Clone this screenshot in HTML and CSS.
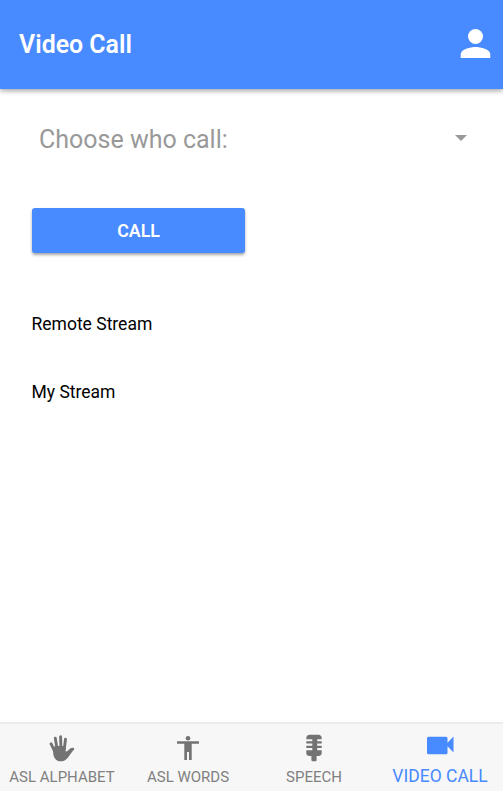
FILE: index.html
```html
<!DOCTYPE html>
<html lang="en">
<head>
<meta charset="utf-8">
<title>Video Call</title>
<link rel="stylesheet" href="styles.css">
</head>
<body>
<header class="header">
  <h1 class="title">Video Call</h1>
  <svg class="person" viewBox="0 0 30 30" fill="currentColor"><circle cx="15" cy="7.500" r="7.500"/><path d="M.2 29v-3.500C.2 20 10 18 15 18s14.800 2 14.800 7.500V29z"/></svg>
</header>
<main class="content">
  <div class="select"><span>Choose who call:</span><i class="arrow"></i></div>
  <button class="call">CALL</button>
  <p class="stream">Remote Stream</p>
  <p class="stream">My Stream</p>
</main>
<nav class="tabs">
  <a class="tab">
    <svg class="icon" viewBox="0 0 28 28" fill="none" stroke="currentColor" stroke-linecap="round" stroke-linejoin="round"><path stroke-width="2.900" d="M6.500 17 3.100 9.800M9 15 7.300 4.300M12.900 15l-.3-12.300M16.300 15l1.200-9.800"/><path fill="currentColor" stroke="none" d="M4.900 13.500 7.500 12h10.200l-.2 4.500c.2 1 1.100 1.200 1.900.5l2.800-2.400c1.500-1.300 4.400-.8 4 .6-.2.700-1.100 1.200-1.700 2l-3.200 4.600c-2.400 3.500-4.300 5.500-8.700 5.500-4.600 0-6.700-3.400-7.300-7.300z"/></svg>
    <span class="label">ASL ALPHABET</span>
  </a>
  <a class="tab">
    <svg class="icon" viewBox="0 0 28 28" fill="currentColor"><circle cx="14" cy="4.200" r="2.300"/><path d="M3 7.200h22v2.500h-7.300V26H15v-8h-2v8h-2.700V9.700H3z"/></svg>
    <span class="label">ASL WORDS</span>
  </a>
  <a class="tab">
    <svg class="icon" viewBox="0 0 28 28" fill="currentColor"><path d="M6.300 5.300V4.500q0-3.700 3.500-3.700h8.400q3.500 0 3.500 3.700v.8h-4.500v2h4.500v2.200h-4.500v2.200h4.500v2.200h-4.500v2.300h4.500v2.800q0 3-3.400 3h-1.700v3.900q0 1.300-1.200 1.300h-2.800q-1.200 0-1.200-1.300v-3.900H9.700q-3.400 0-3.400-3v-2.800h6v-2.300h-6v-2.200h6V9.500h-6V7.300h6v-2z"/></svg>
    <span class="label">SPEECH</span>
  </a>
  <a class="tab active">
    <svg class="icon" viewBox="0 0 28 28" fill="currentColor"><path d="M2.500 4.700H20q1.500 0 1.500 1.500v4.600l6-6.200v15.800l-6-6.200v6.500q0 1.500-1.500 1.500H2.500Q1 22.200 1 20.700V6.200q0-1.500 1.500-1.500z"/></svg>
    <span class="label">VIDEO CALL</span>
  </a>
</nav>
</body>
</html>
```
FILE: styles.css
```css
* { box-sizing: border-box; }
body {
  margin: 0;
  height: 791px;
  display: flex;
  flex-direction: column;
  background: #fff;
  color: #000;
  font-family: Roboto, sans-serif;
  overflow: hidden;
}
.header {
  height: 89px;
  flex: none;
  display: flex;
  align-items: center;
  justify-content: space-between;
  padding: 0 12px 0 19px;
  background: #488aff;
  color: #fff;
  box-shadow: 0 2px 5px rgba(0, 0, 0, .35);
}
.title { margin: 0; font-size: 24.900px; font-weight: 600; line-height: 30px; }
.person { width: 31px; height: 30px; margin-bottom: 2px; }
.content { flex: 1; padding: 30px 32px 0 31.500px; }
.select {
  height: 40px;
  display: flex;
  align-items: center;
  justify-content: space-between;
  padding: 0 4.500px 0 7.500px;
  color: #999;
  font-size: 25px;
}
.arrow {
  margin-bottom: 2px;
  border: 6.500px solid transparent;
  border-top-color: #999;
  border-bottom: 0;
}
.call {
  display: block;
  width: 213px;
  height: 45px;
  margin: 49px 0 60px .5px;
  padding: 0;
  border: 0;
  border-radius: 3px;
  background: #488aff;
  color: #fff;
  font: 600 17.800px/45px Roboto, sans-serif;
  box-shadow: 0 2px 3px rgba(0, 0, 0, .35);
}
.stream { margin: 0 0 46px; font-size: 17.500px; line-height: 22px; }
.tabs {
  height: 69px;
  flex: none;
  display: grid;
  grid-template-columns: repeat(4, 126px);
  margin-left: -1px;
  border-top: 2px solid #ececec;
  background: #f7f7f7;
}
.tab {
  display: flex;
  flex-direction: column;
  align-items: center;
  padding-top: 10px;
  color: #737373;
  white-space: nowrap;
}
.icon { width: 28px; height: 28px; flex: none; }
.label { margin-top: 6px; color: #808080; font-size: 15px; line-height: 18px; }
.active { padding-top: 8px; color: #488aff; }
.active .label { margin-top: 7px; color: #488aff; font-size: 17.500px; }
```
